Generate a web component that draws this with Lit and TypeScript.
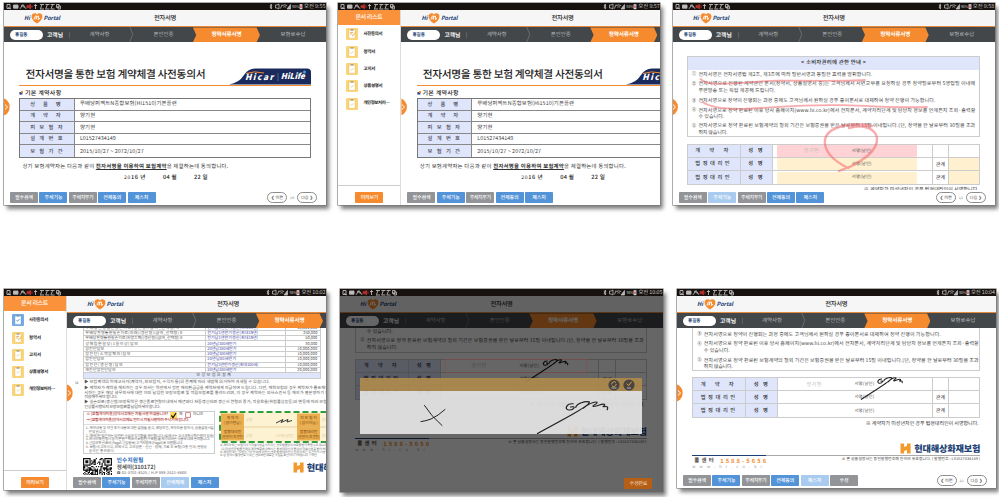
import { LitElement, html, css, svg, nothing } from "lit";
import { customElement } from "lit/decorators.js";

const FAMILY = '"Noto Sans CJK KR", "Noto Sans", sans-serif';
const ctx = document.createElement("canvas").getContext("2d")!;

/** Text tracked so that it spans the given width. */
const fit = (s: string, w: number, size: number, cls = "", weight = 400) => {
  ctx.font = `${weight} 100px ${FAMILY}`;
  const natural = (ctx.measureText(s).width * size) / 100;
  const n = [...s].length;
  const ls = ((w - natural) / n).toFixed(3);
  return html`<span class="t ${cls}" style="font-size:${size}px;letter-spacing:${ls}px;font-weight:${weight}">${s}</span>`;
};

/** One line of a document: height, indent, text, width, size. */
const ln = (h: number, x: number, s: string, w: number, size = 5, cls = "", weight = 400) =>
  html`<div class="ln" style="height:${h}px;padding-left:${x}px">${fit(s, w, size, cls, weight)}</div>`;

const SIGN =
  "M21 -20.5C17 -21 15.5 -16.5 18.5 -16.2C21.5 -16 23 -19.5 19.5 -18.2M22.5 -18C23 -20.5 28 -22.6 30.5 -21.8C31 -20 22 -14 14 -9L0 0M27 -17.5C29 -19.5 33 -22.4 35 -21.6C35.5 -20.4 31.5 -19.2 33 -18.6C36 -18.8 38 -21.2 39.5 -20C40 -19 37.5 -18.6 39 -18.4C41.5 -19 41.6 -18 41 -16.4";

const statusBar = (time: string) => html`<div class="status">
  <svg class="sicons" width="55" height="7" viewBox="0 0 55 7" fill="none" stroke="#bbb" stroke-width="0.9">
    <path d="M1 1.5h3v4H1zM2 4.5l3 1.5" />
    <path d="M7.5 2h4.5v3.2H7.5z" fill="#bbb" />
    <path d="M14 5.8l3-4.3l3 4.3M15 2l3.5 2.5" />
    <path d="M21 2.6h1.6l2-1.2v4.4l-2-1.2H21zM26 2.4v2.4" stroke="#b5302a" fill="#b5302a" />
    <path d="M29.5 1v5M28 2.5h3" />
    <path d="M34 1.5h4M36 1.5l-1.5 4.2M34 6h4M39.4 1.5h4M41.4 1.5l-1.5 4.2M39.4 6h4M44.6 1.5h4M46.6 1.5l-1.5 4.2M44.6 6h4" />
    <path d="M50.5 1.5h2.6v3h-2.6zM52 3h2.4v3H52z" />
  </svg>
  <span class="grow"></span>
  <svg width="22" height="7" viewBox="0 0 22 7" fill="none" stroke="#bbb" stroke-width="0.8">
    <path d="M1 2l2 3l-1 1V1l1 1l-2 3M6.5 2v3h1.5l2 1V1l-2 1zM11.5 5.5l1.5-4" />
    <path d="M13.2 2.6q2.5-1.6 5 0M14.3 4.2q1.4-1 2.8 0" />
    <path d="M18 6l3.6-4.5V6z" fill="#bbb" />
  </svg>
  ${fit("91%", 7, 4.2, "st")}
  <svg width="4" height="7" viewBox="0 0 4 7"><path d="M.6 1.2h2.8v5H.6z" fill="#ddd" /><path d="M1.4 2.4h1.2v2.6H1.4z" fill="#c33" /></svg>
  ${fit(time, time.length > 7 ? 24 : 21.5, 5.4, "st")}
</div>`;

const header = () => html`<div class="head">
  <div class="brand">
    ${fit("Hi", 6, 5.6, "navy it", 700)}
    <svg width="12" height="12" viewBox="0 0 12 12">
      <path d="M6 11.5C3 9.5 .4 7 .6 3.9C.8 1 4.4 .2 6 2.4C7.6 .2 11.2 1 11.4 3.9C11.6 7 9 9.5 6 11.5z" fill="#f58b2e" />
      <path d="M3 7.5L4.2 4.2Q5.8 3 5.4 5L5 7.2L6 4.6Q7.8 3 7.6 5L7.2 7.6L9 6.2" fill="none" stroke="#fff" stroke-width=".9" />
    </svg>
    ${fit("Portal", 16.5, 5.6, "navy it", 700)}
  </div>
  ${fit("전자서명", 22, 6.3, "", 500)}
</div>`;

const nav = () => html`<div class="nav">
  <div class="who">${fit("홍길동", 12.5, 4.6, "navy", 700)}</div>
  <div class="cust">${fit("고객님", 16, 5.8, "", 700)}</div>
  <div class="step">${fit("계약사항", 20, 5.4)}</div>
  <svg class="chev" width="5" height="15" viewBox="0 0 5 15"><path d="M.8 0L3.8 7.5L.8 15" fill="none" stroke="#777b7e" stroke-width=".7" /></svg>
  <div class="step two">${fit("본인인증", 20, 5.4)}</div>
  <div class="step on">${fit("청약서류서명", 30, 5.6, "", 700)}</div>
  <div class="step last">${fit("보험료수납", 25, 5.4)}</div>
</div>`;

const tab = () => html`<div class="tab"><svg width="5" height="6" viewBox="0 0 5 6"><path d="M1 .6L3.6 3L1 5.4" fill="none" stroke="#fff" stroke-width="1" /></svg></div>`;

type Btn = [string, "g" | "b" | "l"];
const toolbar = (btns: Btn[], page: string | null) => html`<div class="tools">
  ${btns.map(([s, k]) => html`<div class="btn ${k}">${fit(s, s.length > 4 ? 21 : s.length * 4.5, 5, "", 500)}</div>`)}
  <span class="grow"></span>
  ${page
    ? html`<div class="pg">${fit("❮ 이전", 12, 4.2)}</div>
        <div class="pn">${fit(page, 4, 3.2)}</div>
        <div class="pg">${fit("다음 ❯", 12, 4.2)}</div>`
    : nothing}
</div>`;

const BASE: Btn[] = [["필수검색", "g"], ["주석기능", "b"], ["주석지우기", "g"], ["전체동의", "b"], ["제스처", "b"]];

const docIcon = (i: number, first: boolean) => html`<svg class="dic" width="12" height="12" viewBox="0 0 12 12">
  <rect width="12" height="12" rx="1" fill=${first ? "#74aae6" : "#fbd577"} />
  <path d="M3 2h6v8.4H3z" fill="#fff" stroke=${first ? "#4d84c4" : "#d9a437"} stroke-width=".3" />
  <path d="M4.6 1.4h2.8v1.2H4.6z" fill="#8a8f96" />
  ${i === 1
    ? svg`<path d="M4.2 4.4h3M4.2 6h2.2M6 8.2l3.4-3.2" stroke="#d88b2a" stroke-width=".7" fill="none" />`
    : svg`<path d="M4.6 6.2l1 1.2l1.9-2.4" stroke=${first ? "#2f6fb8" : "#d8c8a4"} stroke-width=".7" fill="none" />`}
</svg>`;

const DOCS: [string, number][] = [["사전동의서", 19], ["청약서", 12], ["고지서", 12], ["상품설명서", 19], ["개인정보처리…", 26]];
const sidebar = (active: boolean) => html`<div class="side">
  <div class="stitle">${fit("문서 리스트", 27, 6, "", 500)}</div>
  <div class="docs">
    ${DOCS.map(([s, w], i) => html`<div class="doc-item">${docIcon((active ? i : i + 1), active && i === 0)}${fit(s, w, 4.4, "", 700)}</div>`)}
  </div>
  <div class="sfoot"><div class="obtn">${fit("미리보기", 17.5, 5, "", 500)}</div></div>
</div>`;

const CONSENT: [string, string, number][] = [
  ["상 품 명", "무배당퍼펙트N종합보험(Hi1510)기본플랜", 97],
  ["계 약 자", "양기현", 15.5],
  ["피 보 험 자", "양기현", 15.5],
  ["설 계 번 호", "L01527434149", 36],
  ["보 험 기 간", "2015/10/27 ~ 2072/10/27", 64],
];

const consent = () => html`<div class="consent">
  <div class="ctitle">
    ${fit("전자서명을 통한 보험 계약체결 사전동의서", 180, 10.7, "", 500)}
    <div class="hicar">
      <svg width="82" height="17" viewBox="0 0 82 17">
        <path d="M0 16.5Q10 15 15 7Q19 .5 26 .5H78Q82 .5 82 4V16.5z" fill="#1b2a5c" />
        <path d="M17 5.5q8-3 18-.5" stroke="#f58b2e" fill="none" stroke-width="1" />
        <path d="M49 5v8" stroke="#8894b8" stroke-width=".5" />
        <circle cx="75.5" cy="4" r="1.5" fill="#3ba7e0" />
      </svg>
      <div class="hl">${fit("Hicar", 30, 8.4, "it", 900)}${fit("HiLife", 24, 8, "it", 900)}</div>
    </div>
  </div>
  <div class="sect"><svg width="4" height="4" viewBox="0 0 4 4"><path d="M.4 1h3v2.6h-3z" fill="#2a4d8f" /><path d="M2 0h2v2H2z" fill="#f58b2e" /></svg>${fit("기본 계약사항", 36.5, 6, "", 500)}</div>
  <div class="ctable">
    ${CONSENT.map(([a, b, w]) => html`<div class="crow"><div class="cl">${fit(a, 34, 5.3, "", 500)}</div><div class="cv">${fit(b, w, 5.4)}</div></div>`)}
  </div>
  <div class="agree">
    ${fit("상기 보험계약자는 다음과 같이 ", 73.5, 5.4)}${fit("전자서명을 이용하여 보험계약", 71, 5.4, "u", 700)}${fit("을 체결하는데 동의합니다.", 62, 5.4)}
  </div>
  <div class="date">
    ${fit("20", 7, 5)}${fit("16 년", 15, 5.6, "", 500)}<i></i>${fit("04 월", 14, 5.6, "", 500)}<i></i>${fit("22 일", 14, 5.6, "", 500)}
  </div>
</div>`;

const L2 = "전자서명으로 진행된 계약관련 문서(청약서, 상품설명서 등)는 고객님께서 서면교부를 요청하실 경우 청약일로부터 5영업일 이내에";
const L3 = "전자서명으로 청약이 진행되는 과정 중에도 고객님께서 원하실 경우 종이문서로 대체하여 청약 진행이 가능합니다.";
const L4 = "전자서명으로 청약 완료된 이후 당사 홈페이지(www.hi.co.kr)에서 전자문서, 계약처리단계 및 담당자 정보를 언제든지 조회·출력할";
const L5 = "전자서명으로 청약 완료된 보험계약의 철회 기간은 보험증권을 받은 날로부터 15일 이내입니다.(단, 청약을 한 날로부터 30일을 초과";

/** Numbered clause: mark, gap above, text, width. */
const clause = (mark: string, gap: number, s: string, w: number) =>
  html`<div class="clause" style="margin-top:${gap}px"><div class="mk">${mark}</div>${fit(s, w, 5)}</div>`;

const signTable = (mode: "fill" | "plain") => html`<div class="stable ${mode}">
  ${["계 약 자", "법정대리인", "법정대리인"].map(
    (n, i) => html`<div class="srow">
      <div class="c1">${fit(n, 37, 5.3, "", 500)}</div>
      <div class="c2">${fit("성 명", 16, 5.3, "", 500)}</div>
      <div class="c3"><div class="ink ${i ? "y" : "p"}">
        <span class="nm">${i ? nothing : fit("양기현", 15.5, 5.2)}</span>${fit("서명(날인)", 20, 4.4)}
      </div></div>
      <div class="c4">${i ? fit("관계", 9.5, 5) : nothing}</div>
      <div class="c5 ${i ? "y" : ""}"></div>
    </div>`,
  )}
</div>`;

const hdLogo = () => html`<svg width="11" height="11" viewBox="0 0 11 11"><path d="M.5 .5h3.6v3.6L7 3V.5h3.6v10H7V7L4.1 8v2.5H.5z" fill="#f39a2d" /></svg>`;

const docFoot = () => html`<div class="dfoot">
  <div class="hd">${hdLogo()}${fit("현대해상화재보험", 66, 9.2, "navy", 900)}</div>
  <div class="rule"><b></b></div>
  <div class="call">
    <div>
      <div class="tel">${fit("콜센터", 22, 5.4, "", 700)}${fit("1588-5656", 48, 5.8, "or", 700)}</div>
      ${fit("www.hi.co.kr", 74, 4, "pale")}
    </div>
    <div class="note">${fit("※ 본 상품설명서는 동일발행번호에 한하여 유효합니다. ( 발행번호 : L01527434149 )", 139, 3.9)}</div>
  </div>
</div>`;

const PLAN: [string, string, string][] = [
  ["무배당질병입원실손의료(갱신형)(급여_선택형)Ⅱ", "전기납1년만기갱신(최대15년)", "50,000,000"],
  ["무배당질병통원실손의료(외래)(갱신형)(급여_선택형)Ⅱ", "전기납1년만기갱신(최대15년)", "250,000"],
  ["무배당질병통원실손의료(처방조제)(갱신형)(급여_선택형)Ⅱ", "전기납1년만기갱신(최대15년)", "50,000"],
  ["상해입원일당(1일이상)담보", "20년납100세만기", "30,000"],
  ["암진단담보", "20년납100세만기", "10,000,000"],
  ["암진단(소액암제외)담보", "20년납100세만기", "10,000,000"],
  ["암진단담보", "20년납80세만기", "10,000,000"],
  ["암진단(갱신형)담보", "전기납3년만기갱신(최대100세)", "10,000,000"],
  ["재진단암진단담보", "20년납100세만기", "20,000,000"],
];

const qr = () => {
  const n = 25, r = [];
  let seed = 7;
  for (let y = 0; y < 17; y++)
    for (let x = 0; x < n; x++) {
      seed = (seed * 1103515245 + 12345) % 2147483648;
      if ((seed >> 12) % 2) r.push(`M${x} ${y}h1v1h-1z`);
    }
  return html`<svg class="qr" width="29" height="19" viewBox="0 0 25 16.4">
    <path d=${r.join("")} fill="#111" />
    <path d="M0 0h7v7H0zM18 0h7v7h-7z" fill="#fff" />
    <path d="M.5 .5h5.6v5.6H.5zM18.9 .5h5.6v5.6h-5.6z" fill="none" stroke="#111" />
    <path d="M2 2h2.6v2.6H2zM20.4 2H23v2.6h-2.6z" fill="#111" />
  </svg>`;
};

const plan = () => html`<div class="plan">
  <div class="ptable">
    ${PLAN.map(([a, b, c]) => html`<div class="prow">
      <div class="pa">${fit(a, Math.min(98, a.length * 3.8), 4)}</div>
      <div class="pb">${fit(b, b.length > 12 ? 51 : 29, 4)}</div>
      <div class="pc">${fit(c, c.length * 2, 4)}</div>
    </div>`)}
    <div class="psum">${fit("보장보험료합계", 36, 4.2)}</div>
  </div>
  <div class="pnote">
    <div class="pno">${fit("14", 3.4, 3.4)}</div>
    ${ln(7, 1, "▶ 보험계약의 이해교사자(계약자, 피보험자, 수익자 등)의 관계에 따라 세법에 의거하여 과세될 수 있습니다.", 186, 4.2)}
    ${ln(4.6, 1, "▶ 계약자가 계약을 해지하는 경우 회사는 약관에서 정한 해지환급금을 계약자에게 지급하여 드립니다. 다만, 해외보험의 경우 계약자가 중도해지", 245, 4.1)}
    ${ln(4.4, 1, "시하는 경우 해당 세무회사에 대한 이미 납입한 보장보험료 및 적립보험료를 돌려드리며, 이 경우 계약자는 의사소견서 등 해지가 불분명하기 전", 245, 4.1)}
    ${ln(4.6, 1, "적용해주셔야 합니다.", 33, 4.1)}
    ${ln(4.6, 1, "▶ 실손의료(갱신형)보장특약은 갱신종료연령이내에서 매년마다 자동갱신되며 갱신시 연령의 증가, 적용요율(위험률상승등)의 변동에 따라 보험", 243, 4.1)}
    ${ln(4.6, 1, "인상률시행되지 보장보험료를 납입하셔야 합니다.", 76, 4.1)}
  </div>
  <div class="pmid">
    <div class="pbox">
      <div class="ask">
        ${fit("※ [보험계약자용]청약서류에는 자필서명 하였습니까?", 82, 3.9, "red", 500)}
        <svg class="ck" width="7" height="7" viewBox="0 0 7 7"><rect width="7" height="7" fill="#ffd95a" /><path d="M1.4 3.4l1.6 2.2L6 1" stroke="#111" fill="none" stroke-width="1.2" /></svg>
        ${fit("예", 4, 3.9)}
        <svg width="6" height="6" viewBox="0 0 6 6"><path d="M.6 .6h4.8v4.8H.6z" fill="#fff" stroke="#b33" stroke-width=".6" /></svg>
        ${fit("아니오", 10, 3.9)}
      </div>
      ${ln(5, 2, "→ [보험계약자용]청약서류에도 반드시 자필서명하여 주시기 바랍니다.", 103, 3.9, "red", 500)}
      <div class="plist">
        ${[
          ["1. 계약내용 및 약관 주요내용에 대한 설명을 듣고, 해당약관, 계약자용 청약서, 상품설명서를", 128],
          ["   받았습니다.", 21],
          ["2. (중략)한 질문하는 답변란 사실과 일치함을 확인합니다.(실제사는 교사과학사학인원이 있음)", 128],
          ["3. 자사이해 신청시 상기 콘텐츠회에서 보험환(조로정)을 적시되하는 사용에 대해 동의합니다.", 124],
          ["4. 민감의학 진료비 (Page5 민감정보) 고객지원에 (Page5)로 지원합니다.", 97],
          ["5. 보험사(고의사고, 자체사고, 고의성분 · 진단 · 장해, 치료 후 보험(각종 링크) 현장상", 121],
          ["   공식인 통하겠다.", 29],
        ].map(([s, w]) => ln(3.93, 1.5, s as string, w as number, 3.5))}
      </div>
    </div>
    <div class="pright">
      <svg class="stamp" width="120" height="32" viewBox="0 0 120 32">
        <rect x="1" y="1" width="130" height="30" fill="#fdf3d3" />
        <path d="M2 2.5h23v27H2zM78 2.5h23v27H78z" fill="#ecae4e" />
        <path d="M2 16h118" stroke="#dcb775" stroke-width=".6" />
        <g font-size="3.8" fill="#6b4212" text-anchor="middle">
          <text x="13.5" y="8">계 약 자</text><text x="13.5" y="13.4">( 양기현님 )</text>
          <text x="13.5" y="22">법정대리인</text><text x="13.5" y="27.2" textLength="22" lengthAdjust="spacingAndGlyphs">(친권자/후견인)</text>
          <text x="89.5" y="8">피 보 험 자</text><text x="89.5" y="13.4">( 김이자님 )</text>
          <text x="89.5" y="22">법정대리인</text><text x="89.5" y="27.2" textLength="22" lengthAdjust="spacingAndGlyphs">(친권자/후견인)</text>
          <g fill="#e0c898"><text x="30" y="10">성명</text><text x="30" y="26">성명</text><text x="66" y="26">(서명/날인)</text><text x="106" y="10">성명</text><text x="106" y="26">성명</text></g>
        </g>
        <path d="M57 12L64 8.5L62 11.5L69 8.5L68 11L73 9.5" fill="none" stroke="#222" stroke-width=".9" />
        <rect x="1" y="1" width="130" height="30" rx="1.5" fill="none" stroke="#2f9e3a" stroke-width="2" stroke-dasharray="6 3" />
      </svg>
      <div class="tiny">
        ${ln(3.3, 1, "※ 계약자 또는 보험회사가 자필서명을 하지 않는 경우 법률상의 보호를 받지 못할 수도 있으며 (위험)하니", 120, 3.1)}
        ${ln(3.3, 1, "  (1) 미성년자 법률관계의 계약체결에 의해서는 법정대리인의 동의와 자필서명을 받아 처리하여야 하", 120, 3.1)}
        ${ln(3.3, 1, "※ 계약자 또는 지정하고자 만19세 미만인 경우 법정대리인인 친권자 또는 후견인이 서명하여 주시기", 120, 3.1)}
        ${ln(3.3, 1, "※ 본 청약서 발행번호가 있는 경우에만 유효한 것임을 확인하시기 바랍니다 고객님", 97, 3.1)}
      </div>
    </div>
  </div>
  <div class="pend">
    ${qr()}
    <div class="agent">
      ${ln(6.4, 0, "인수지원팀", 27, 5.6, "blue", 700)}
      ${ln(6.8, 0, "정세미(310172)", 39, 5.6, "", 700)}
      ${ln(5.4, 0, "☎ 02-3701-8525 / H.P 999-2521-6800", 70, 3.8)}
    </div>
    <div class="hd">${hdLogo()}${fit("현대해상화재보험", 66, 9.2, "navy", 900)}</div>
  </div>
</div>`;

@customElement("app-root")
export class AppRoot extends LitElement {
  static styles = css`
    :host { display: block; width: 999px; height: 497px; background: #fff; overflow: hidden; box-sizing: border-box;
      font-family: "Noto Sans CJK KR", "Noto Sans", sans-serif; color: #222; text-rendering: geometricPrecision; }
    * { box-sizing: border-box; }
    .t { white-space: pre; line-height: 1; display: block; flex: none; }
    .it { font-style: italic; }
    .navy { color: #1c3f74; }
    .blue { color: #2b6cb5; }
    .red { color: #b23a3a; }
    .or { color: #f08a2c; }
    .pale { color: #999; }
    .u { text-decoration: underline; text-underline-offset: 1px; text-decoration-thickness: .6px; }
    .grow { flex: 1; }
    .grid { display: grid; justify-content: start; align-items: start; padding: 3px 0 0 4px; height: 286px; }
    .r1 { grid-template-columns: 322px 322px 322px; column-gap: 12.4px; }
    .r2 { grid-template-columns: 322px 323px 318.5px; column-gap: 14px; height: 211px; }
    .panel { position: relative; display: flex; flex-direction: column; height: 202px; background: #fff; overflow: hidden; }
    .frame { box-shadow: 0 0 0 .6px #777, 3px 4px 4px rgba(0,0,0,.5); }
    .h4 .panel { height: 201px; }
    .h5 .panel { height: 202.5px; }
    .h6 .panel { height: 199px; }
    .status { flex: none; height: 7.4px; background: #17120f; color: #c4c4c4; display: flex; align-items: center; padding: 0 .6px 0 2px; }
    .status .st { margin-left: 1px; }
    .body { flex: 1; display: flex; min-height: 0; }
    .screen { position: relative; flex: none; width: 322px; display: flex; flex-direction: column; min-height: 0; }
    .h5 .screen { width: 323px; }
    .h6 .screen { width: 318.5px; }
    .head { position: relative; flex: none; height: 17.1px; background: #f6f6f6; border-bottom: .9px solid #e58a3a; display: flex; align-items: center; justify-content: center; padding-bottom: 1px; }
    .brand { position: absolute; left: 20px; top: 2px; display: flex; align-items: center; gap: .8px; }
    .nav { flex: none; height: 14.8px; background: #43474a; display: flex; align-items: center; color: #b9bcbe; }
    .who { margin-left: 6px; width: 33px; height: 10px; border-radius: 5px; background: #fff; display: flex; align-items: center; padding-left: 5px; }
    .cust { color: #fff; width: 27px; padding-left: 4px; display: flex; height: 6px; border-right: .6px solid #5d6164; }
    .step { display: flex; align-items: center; justify-content: center; height: 100%; flex: 58; }
    .chev { flex: none; }
    .two { flex: 58; }
    .on { flex: 66; background: #f58b2e; color: #fff; clip-path: polygon(0 0, 95% 0, 100% 50%, 95% 100%, 0 100%, 5% 50%); }
    .last { flex: 65; }
    .content { flex: 1; min-height: 0; overflow: hidden; background: #fff; }
    .tab { position: absolute; left: -12.4px; top: 87.4px; width: 18px; height: 18px; border-radius: 50%; background: #f58b2e; display: flex; align-items: center; justify-content: flex-end; padding-right: 1px; clip-path: inset(0 0 0 12.4px); }
    .tools { flex: none; height: 15px; display: flex; align-items: flex-start; padding: 2.2px 9px 0 6px; gap: 1.4px; background: #fff; }
    .btn { width: 28px; height: 10.8px; border-radius: .8px; color: #fff; display: flex; align-items: center; justify-content: center; }
    .g { background: #929497; }
    .b { background: #5393d8; }
    .l { background: #a9cbef; }
    .pg { width: 20px; height: 11.4px; border: .7px solid #8c8c8c; border-radius: 6px; display: flex; align-items: center; justify-content: center; color: #555; margin-top: -.2px; }
    .pn { color: #777; padding: 4px 1.6px 0; }
    .side { flex: none; width: 63px; background: #fff; border-right: .6px solid #ddd; display: flex; flex-direction: column; }
    .stitle { height: 14.2px; background: #f9923b; color: #fff; display: flex; align-items: center; justify-content: center; padding-right: 1px; }
    .docs { flex: 1; display: flex; flex-direction: column; padding: 1.2px 0 0 8px; }
    .doc-item { height: 17.3px; display: flex; align-items: center; gap: 5px; }
    .dic { flex: none; }
    .sfoot { height: 19.6px; border-top: .7px solid #ccc; display: flex; justify-content: center; padding-top: 6px; }
    .obtn { width: 28px; height: 10.8px; border-radius: .8px; background: #f58b2e; color: #fff; display: flex; align-items: center; justify-content: center; }
    .ln { display: flex; align-items: center; }

    .consent { padding: 25.8px 11.5px 0 15.4px; }
    .ctitle { height: 17.6px; border-bottom: 1.3px solid #f58b2e; display: flex; justify-content: space-between; padding-left: 6px; padding-top: 2.2px; margin-right: 0; width: 291.5px; }
    .hicar { position: relative; width: 82px; margin-top: -2.2px; display: flex; }
    .hl { position: absolute; left: 16px; top: 5px; display: flex; gap: 6px; color: #fff; }
    .sect { height: 12.2px; display: flex; align-items: center; gap: 1.6px; padding-top: 2px; }
    .ctable { border: .8px solid #777; width: 292px; }
    .crow { display: flex; height: 11.65px; border-bottom: .7px solid #888; }
    .crow:last-child { border-bottom: 0; }
    .cl { width: 54.5px; background: #dfe6fb; border-right: .7px solid #888; display: flex; align-items: center; justify-content: center; color: #445; }
    .cv { display: flex; align-items: center; padding-left: 5px; color: #444; }
    .agree { display: flex; padding: 5.6px 0 0 3px; color: #333; }
    .date { display: flex; padding: 6.4px 0 0 104.5px; }
    .date i { width: 17px; }

    .rights { padding: 13.4px 14.5px 0 14px; }
    .rbox { border: .7px solid #ccc; height: 81.4px; width: 293.5px; display: flow-root; }
    .rtitle { height: 13px; background: #dfe6fb; display: flex; align-items: center; justify-content: center; }
    .clause { height: 6.2px; display: flex; align-items: center; padding-left: 4px; color: #444; }
    .mk { width: 6.6px; font-size: 4.4px; line-height: 1; }
    .stable { margin-top: 7px; border: .6px solid #ccc; width: 293.5px; }
    .srow { display: flex; height: 13px; border-bottom: .6px solid #ccc; color: #333; }
    .srow:last-child { border-bottom: 0; }
    .srow > div { display: flex; align-items: center; justify-content: center; border-right: .6px solid #ccc; }
    .srow > div:last-child { border-right: 0; }
    .c1 { width: 53px; background: #dfe6fb; }
    .c2 { width: 32px; background: #dfe6fb; }
    .c3 { flex: 1; }
    .c4 { width: 16.5px; }
    .c5 { width: 30px; }
    .ink { width: 140px; height: 12px; border-radius: 1px; display: flex; align-items: center; color: #555; margin-right: 11px; }
    .nm { width: 75px; padding-left: 27px; color: #bbb; }
    .fill .p { background: #ffd3d5; }
    .fill .y { background: #fff1cf; }
    .foot { display: flex; justify-content: flex-end; padding: 2.4px 1.5px 0 0; width: 293.5px; color: #333; }
    .scroll .rbox { border-top: 0; width: 288px; }
    .scroll .stable, .scroll .foot { width: 288px; }
    .scroll .stable { margin-top: 6px; }
    .h6 .scroll { padding: 0 0 0 15.2px; }
    .h6 .rbox { height: 43px; }
    .h5 .scroll { padding: 0 0 0 15.2px; }
    .h5 .rbox, .h5 .stable, .h5 .foot { width: 291.5px; }
    .h5 .rbox { height: 24.8px; }
    .dfoot { width: 288px; padding-top: 17.6px; }
    .h5 .dfoot { width: 291.5px; padding-top: 18.2px; }
    .hd { display: flex; align-items: center; justify-content: flex-end; gap: 3px; height: 11px; }
    .rule { height: .7px; background: #aaa; margin-top: 1px; display: flex; }
    .rule b { width: 74px; height: 1px; background: #1c3f74; }
    .call { display: flex; justify-content: space-between; padding-top: 2.4px; color: #444; }
    .tel { display: flex; gap: 4px; padding: 0 0 1px 2px; }

    .dim { position: absolute; inset: 7.4px 0 0 0; background: rgba(0,0,0,.6); }
    .dlg { position: absolute; left: 19.7px; top: 89px; width: 282.3px; height: 56px; display: flex; flex-direction: column; }
    .dbar { height: 13.2px; background: rgba(178,140,76,.88); display: flex; justify-content: flex-end; gap: 3px; padding: 0 7px 0 0; align-items: center; }
    .dpad { flex: 1; background: rgba(232,232,232,.9); }
    .done { position: absolute; right: 10.7px; bottom: 2.4px; background: #b55f16; color: #e8c9ab; }
    .over { position: absolute; left: 0; top: 0; width: 100%; height: 100%; }

    .plan { padding: 0 0 0 16.3px; width: 330px; color: #555; }
    .ptable { width: 238px; border: .5px solid #ccc; border-top: 0; margin-top: -2.6px; }
    .prow { display: flex; height: 5.28px; border-bottom: .5px solid #ccc; align-items: center; }
    .prow > div { display: flex; align-items: center; height: 100%; padding-left: 1px; }
    .pa { width: 122px; border-right: .5px solid #ccc; overflow: hidden; }
    .pb { width: 80px; border-right: .5px solid #ccc; color: #3d43a8; }
    .pc { flex: 1; justify-content: flex-end; padding-right: 3px; }
    .psum { height: 5px; background: #dfe6fb; display: flex; align-items: center; justify-content: center; padding-left: 24px; }
    .pnote { position: relative; height: 31.6px; }
    .pno { position: absolute; left: -8.4px; top: 1.6px; }
    .pmid { display: flex; gap: 4px; height: 46px; }
    .pbox { width: 131.5px; height: 43.6px; border: .5px solid #ccc; flex: none; }
    .ask { display: flex; align-items: center; gap: 2px; padding-left: 2px; height: 7px; }
    .plist { border-top: .5px solid #ddd; padding-top: 1.8px; color: #666; }
    .pright { width: 120px; flex: none; }
    .stamp { display: block; }
    .tiny { padding-top: .6px; color: #666; }
    .pend { display: flex; padding-top: 1.2px; }
    .qr { flex: none; margin-right: 4.4px; }
    .agent { width: 176px; border-bottom: 1px solid #1c3f74; height: 19px; flex: none; }
    .pend .hd { padding-top: 4px; height: 16px; justify-content: flex-start; }
  `;

  render() {
    return html`
      <div class="grid r1">
        <div class="frame"><div class="panel">
          ${statusBar("오전 9:55")}
          <div class="body"><div class="screen">
            ${header()}${nav()}<div class="content">${consent()}</div>${toolbar(BASE, "1/9")}${tab()}
          </div></div>
        </div></div>
        <div class="frame"><div class="panel">
          ${statusBar("오전 9:57")}
          <div class="body">${sidebar(false)}<div class="screen">
            ${header()}${nav()}<div class="content">${consent()}</div>${toolbar(BASE, null)}${tab()}
          </div></div>
        </div></div>
        <div class="frame"><div class="panel">
          ${statusBar("오전 9:58")}
          <div class="body"><div class="screen">
            ${header()}${nav()}
            <div class="content"><div class="rights">
              <div class="rbox">
                <div class="rtitle">${fit("< 소비자권리에 관한 안내 >", 65, 5.4, "", 500)}</div>
                ${clause("①", 1.9, "전자서명은 전자서명법 제2조, 제3조에 따라 일반서명과 동일한 효력을 발휘합니다.", 174)}
                ${clause("②", 3.1, L2, 277)}
                ${clause("", 0, "우편발송 또는 직접 제공해 드립니다.", 77)}
                ${clause("③", 4.6, L3, 237)}
                ${clause("④", 3.3, L4, 277)}
                ${clause("", 0.3, "수 있습니다.", 26)}
                ${clause("⑤", 2.8, L5, 277)}
                ${clause("", 0.8, "하지 않습니다.", 29)}
              </div>
              ${signTable("fill")}
              <div class="foot">${fit("※ 계약자가 미성년자인 경우 법정대리인이 서명합니다.", 115, 5)}</div>
            </div></div>
            ${toolbar([["필수검색", "g"], ["주석기능", "l"], ["주석지우기", "g"], ["전체동의", "b"], ["제스처", "b"]], "1/1")}${tab()}
          </div></div>
          <svg class="over" viewBox="0 0 322 202" fill="none" stroke="#f2686c" stroke-opacity=".55" stroke-linecap="round">
            <path d="M27.5 76Q31 79.5 39 80.3C70 82 82 77.5 107 77.6S170 78.5 192 77" stroke-width="1.8" />
            <path d="M29.5 99C36 103.5 46 106.4 70 105.8S130 101 170 102.2S230 105 254 104" stroke-width="1.8" />
            <path d="M199 123C182 119 156 122 152 136C150 150 165 160 175 165C188 158 205 149 204 135C203 127 192 120 176 125M181 162L166 168" stroke-width="2.4" />
          </svg>
        </div></div>
      </div>
      <div class="grid r2">
        <div class="frame h4"><div class="panel">
          ${statusBar("오전 10:02")}
          <div class="body">${sidebar(true)}<div class="screen">
            ${header()}${nav()}<div class="content">${plan()}</div>
            ${toolbar([["필수검색", "g"], ["주석기능", "b"], ["주석지우기", "g"], ["전체해제", "l"], ["제스처", "b"]], null)}${tab()}
          </div></div>
        </div></div>
        <div class="frame h5"><div class="panel">
          ${statusBar("오전 10:05")}
          <div class="body"><div class="screen">
            ${header()}${nav()}
            <div class="content"><div class="rights scroll">
              <div class="rbox">
                ${clause("", 0.3, "수 있습니다.", 26)}
                ${clause("⑤", 2.8, L5, 277)}
                ${clause("", 1.1, "하지 않습니다.", 31)}
              </div>
              ${signTable("plain")}
              <div class="foot">${fit("※ 계약자가 미성년자인 경우 법정대리인이 서명합니다.", 115, 5)}</div>
              ${docFoot()}
            </div></div>
          </div></div>
          <div class="dim"></div>
          <svg class="over" viewBox="0 0 323 202.5" fill="none">
            <rect x="105" y="70.5" width="142" height="13" rx="1" stroke="#8c4a4a" stroke-width=".6" />
            <path d=${SIGN} transform="translate(186.5 92.5)" stroke="#0a0a0a" stroke-width="1.1" />
          </svg>
          <div class="dlg">
            <div class="dbar">
              <svg width="12" height="12" viewBox="0 0 12 12"><circle cx="6" cy="6" r="5.6" fill="#4a4540" /><path d="M3.6 5.4A2.5 2.5 0 0 1 8 3.6M8.2 5A2.5 2.5 0 0 1 4 6.9" fill="none" stroke="#d9a14b" stroke-width=".9" /><path d="M3.5 9h5" stroke="#bbb" stroke-width=".9" /></svg>
              <svg width="12" height="12" viewBox="0 0 12 12"><circle cx="6" cy="6" r="5.6" fill="#4a4540" /><path d="M3.8 4.6L5.6 6.6L8.6 2.8" fill="none" stroke="#e8a33c" stroke-width="1" /><path d="M4 9h4" stroke="#bbb" stroke-width=".9" /></svg>
            </div>
            <div class="dpad"></div>
          </div>
          <svg class="over" viewBox="0 0 323 202.5" fill="none" stroke="#222" stroke-linecap="round">
            <path d="M84.5 116.5Q91 127 102 136.5M105 120.5Q98 127 91 130Q86 132 81 132.6" stroke-width="1" />
            <path d=${SIGN} transform="translate(197.5 144.5) scale(1.7 1.45)" stroke-width=".75" />
          </svg>
          <div class="obtn done">${fit("수정완료", 17.5, 5, "", 500)}</div>
        </div></div>
        <div class="frame h6"><div class="panel">
          ${statusBar("오전 10:04")}
          <div class="body"><div class="screen">
            ${header()}${nav()}
            <div class="content"><div class="rights scroll">
              <div class="rbox">
                ${clause("③", 3.3, L3, 237)}
                ${clause("④", 3.1, L4, 275)}
                ${clause("", 0.1, "수 있습니다.", 26)}
                ${clause("⑤", 3.8, L5, 275)}
                ${clause("", 0, "하지 않습니다.", 29)}
              </div>
              ${signTable("plain")}
              <div class="foot">${fit("※ 계약자가 미성년자인 경우 법정대리인이 서명합니다.", 113, 5)}</div>
              ${docFoot()}
            </div></div>
            ${toolbar([["필수검색", "g"], ["주석기능", "b"], ["주석지우기", "g"], ["전체동의", "b"], ["제스처", "l"], ["수정", "g"]], "1/1")}${tab()}
          </div></div>
          <svg class="over" viewBox="0 0 318.5 199" fill="none"><path d=${SIGN} transform="translate(184 110.5)" stroke="#222" stroke-width="1.1" /></svg>
        </div></div>
      </div>
    `;
  }
}
